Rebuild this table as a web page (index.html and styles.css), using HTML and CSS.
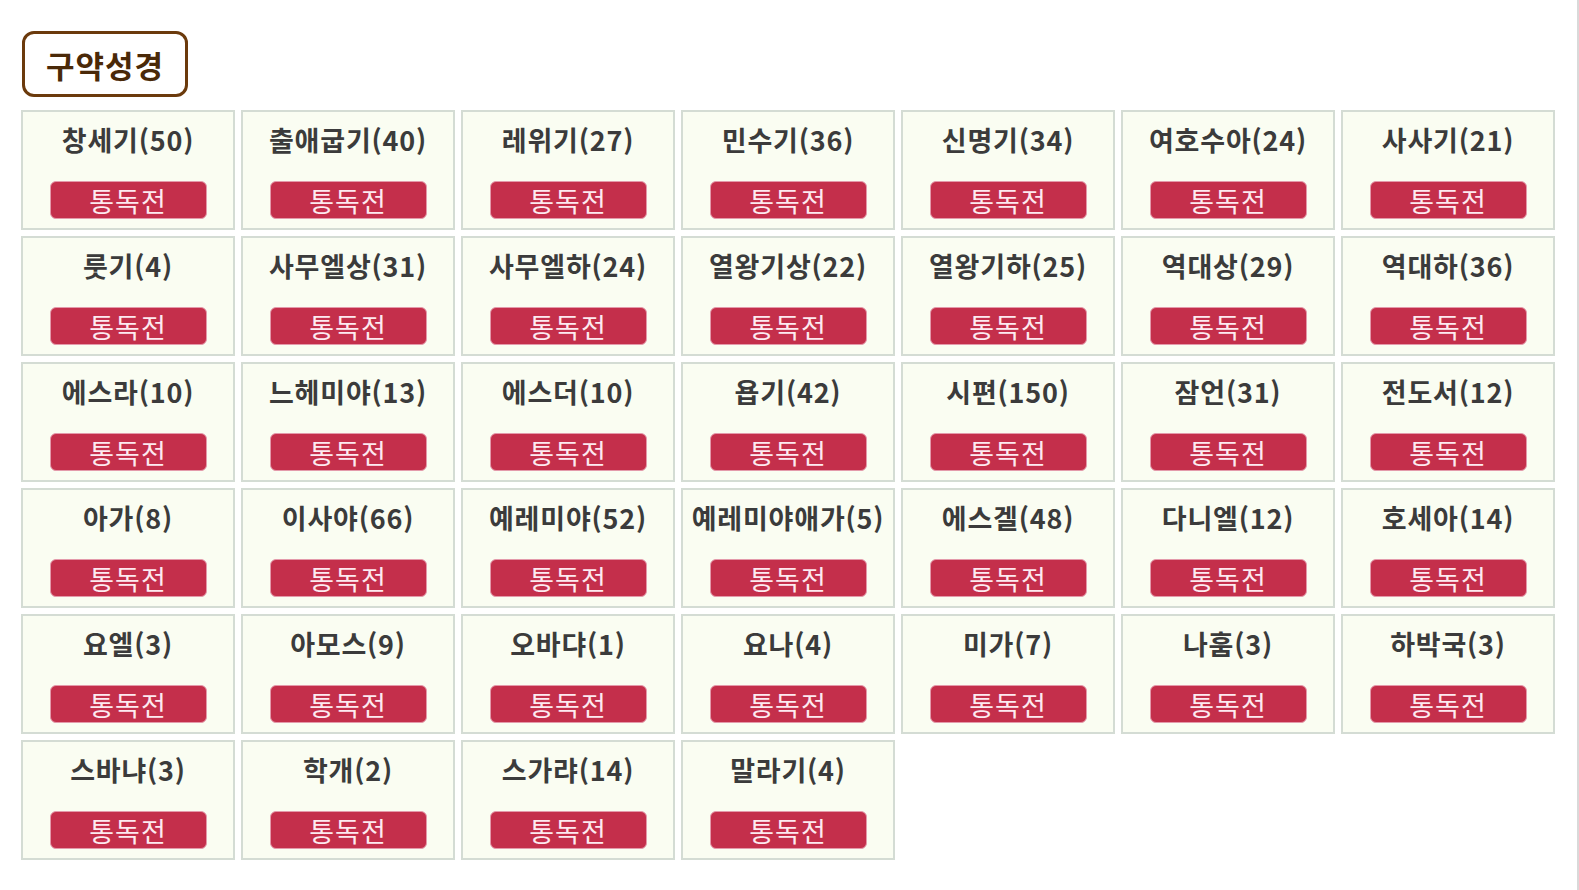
FILE: index.html
```html
<!DOCTYPE html>
<html lang="ko">
<head>
<meta charset="utf-8">
<title>구약성경</title>
<link rel="stylesheet" href="styles.css">
</head>
<body>
<div class="page">
  <div class="section-title">구약성경</div>
  <div class="grid">
    <div class="card"><div class="name">창세기(50)</div><div class="btn">통독전</div></div>
    <div class="card"><div class="name">출애굽기(40)</div><div class="btn">통독전</div></div>
    <div class="card"><div class="name">레위기(27)</div><div class="btn">통독전</div></div>
    <div class="card"><div class="name">민수기(36)</div><div class="btn">통독전</div></div>
    <div class="card"><div class="name">신명기(34)</div><div class="btn">통독전</div></div>
    <div class="card"><div class="name">여호수아(24)</div><div class="btn">통독전</div></div>
    <div class="card"><div class="name">사사기(21)</div><div class="btn">통독전</div></div>
    <div class="card"><div class="name">룻기(4)</div><div class="btn">통독전</div></div>
    <div class="card"><div class="name">사무엘상(31)</div><div class="btn">통독전</div></div>
    <div class="card"><div class="name">사무엘하(24)</div><div class="btn">통독전</div></div>
    <div class="card"><div class="name">열왕기상(22)</div><div class="btn">통독전</div></div>
    <div class="card"><div class="name">열왕기하(25)</div><div class="btn">통독전</div></div>
    <div class="card"><div class="name">역대상(29)</div><div class="btn">통독전</div></div>
    <div class="card"><div class="name">역대하(36)</div><div class="btn">통독전</div></div>
    <div class="card"><div class="name">에스라(10)</div><div class="btn">통독전</div></div>
    <div class="card"><div class="name">느헤미야(13)</div><div class="btn">통독전</div></div>
    <div class="card"><div class="name">에스더(10)</div><div class="btn">통독전</div></div>
    <div class="card"><div class="name">욥기(42)</div><div class="btn">통독전</div></div>
    <div class="card"><div class="name">시편(150)</div><div class="btn">통독전</div></div>
    <div class="card"><div class="name">잠언(31)</div><div class="btn">통독전</div></div>
    <div class="card"><div class="name">전도서(12)</div><div class="btn">통독전</div></div>
    <div class="card"><div class="name">아가(8)</div><div class="btn">통독전</div></div>
    <div class="card"><div class="name">이사야(66)</div><div class="btn">통독전</div></div>
    <div class="card"><div class="name">예레미야(52)</div><div class="btn">통독전</div></div>
    <div class="card"><div class="name">예레미야애가(5)</div><div class="btn">통독전</div></div>
    <div class="card"><div class="name">에스겔(48)</div><div class="btn">통독전</div></div>
    <div class="card"><div class="name">다니엘(12)</div><div class="btn">통독전</div></div>
    <div class="card"><div class="name">호세아(14)</div><div class="btn">통독전</div></div>
    <div class="card"><div class="name">요엘(3)</div><div class="btn">통독전</div></div>
    <div class="card"><div class="name">아모스(9)</div><div class="btn">통독전</div></div>
    <div class="card"><div class="name">오바댜(1)</div><div class="btn">통독전</div></div>
    <div class="card"><div class="name">요나(4)</div><div class="btn">통독전</div></div>
    <div class="card"><div class="name">미가(7)</div><div class="btn">통독전</div></div>
    <div class="card"><div class="name">나훔(3)</div><div class="btn">통독전</div></div>
    <div class="card"><div class="name">하박국(3)</div><div class="btn">통독전</div></div>
    <div class="card"><div class="name">스바냐(3)</div><div class="btn">통독전</div></div>
    <div class="card"><div class="name">학개(2)</div><div class="btn">통독전</div></div>
    <div class="card"><div class="name">스가랴(14)</div><div class="btn">통독전</div></div>
    <div class="card"><div class="name">말라기(4)</div><div class="btn">통독전</div></div>
  </div>
</div>
</body>
</html>
```

FILE: styles.css
```css
html, body {
  margin: 0;
  padding: 0;
  background: #ffffff;
}

body {
  font-family: "Noto Sans CJK KR", "Noto Sans", sans-serif;
}

.page {
  box-sizing: border-box;
  width: 1579px;
  height: 890px;
  overflow: hidden;
  padding: 31px 0 0 21px;
  border-right: 2px solid #d9d9d9;
}

.section-title {
  box-sizing: border-box;
  display: flex;
  align-items: center;
  justify-content: center;
  width: 166px;
  height: 66px;
  margin-left: 1px;
  border: 3px solid #6b3a0c;
  border-radius: 12px;
  color: #4a2908;
  font-size: 31px;
  font-weight: 700;
  line-height: 1;
  letter-spacing: 1px;
}

.grid {
  display: grid;
  grid-template-columns: repeat(7, 214px);
  grid-auto-rows: 120px;
  column-gap: 6px;
  row-gap: 6px;
  margin-top: 13px;
}

.card {
  box-sizing: border-box;
  display: flex;
  flex-direction: column;
  align-items: center;
  border: 2px solid #d4dcd4;
  background: #fafdf2;
  padding-top: 12px;
}

.name {
  color: #3b3b3b;
  font-size: 27px;
  font-weight: 700;
  line-height: 32px;
  white-space: nowrap;
  letter-spacing: 0.8px;
}

.btn {
  box-sizing: border-box;
  display: flex;
  align-items: center;
  justify-content: center;
  width: 157px;
  height: 38px;
  margin-top: 25px;
  background: #c42f4b;
  border: 1px solid #e49aab;
  border-radius: 6px;
  color: #fdeaf0;
  font-size: 27px;
  font-weight: 400;
  line-height: 1;
  letter-spacing: 1px;
}
```
